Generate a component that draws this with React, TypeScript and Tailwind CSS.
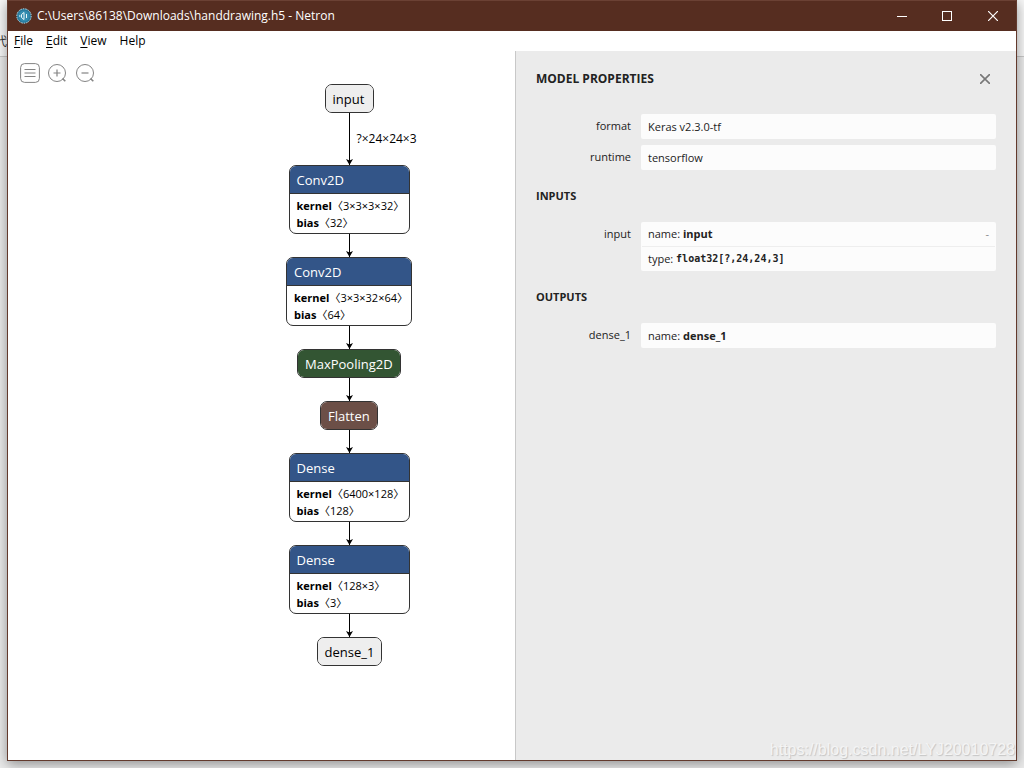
import { FunctionComponent, ReactNode } from "react";

type Attribute = { name: string; value: string };

type LayerProps = {
    title: string;
    color: string;
    width: string;
    attributes?: Attribute[];
};

const layers: LayerProps[] = [
    {
        title: "Conv2D",
        color: "bg-[#335588] text-white",
        width: "w-[121px]",
        attributes: [
            { name: "kernel", value: "〈3×3×3×32〉" },
            { name: "bias", value: "〈32〉" },
        ],
    },
    {
        title: "Conv2D",
        color: "bg-[#335588] text-white",
        width: "w-[126px]",
        attributes: [
            { name: "kernel", value: "〈3×3×32×64〉" },
            { name: "bias", value: "〈64〉" },
        ],
    },
    { title: "MaxPooling2D", color: "bg-[#335533] text-white", width: "w-[104px]" },
    { title: "Flatten", color: "bg-[#6c4f47] text-white", width: "w-[58px]" },
    {
        title: "Dense",
        color: "bg-[#335588] text-white",
        width: "w-[121px]",
        attributes: [
            { name: "kernel", value: "〈6400×128〉" },
            { name: "bias", value: "〈128〉" },
        ],
    },
    {
        title: "Dense",
        color: "bg-[#335588] text-white",
        width: "w-[121px]",
        attributes: [
            { name: "kernel", value: "〈128×3〉" },
            { name: "bias", value: "〈3〉" },
        ],
    },
    { title: "dense_1", color: "bg-[#eeeeee] text-black", width: "w-[65px]" },
];

const Layer: FunctionComponent<LayerProps> = ({ title, color, width, attributes }) => (
    <div className={`${width} shrink-0 overflow-hidden rounded-[7px] border border-[#333333] bg-white`}>
        <div className={`${color} h-[27px] whitespace-nowrap pl-[7px] text-[13px] leading-[28px]`}>{title}</div>
        {attributes && (
            <div className="h-10 border-t border-[#333333] pt-[3px] pl-[7px] text-[11px] leading-[17px] text-black">
                {attributes.map((attribute) => (
                    <div key={attribute.name} className="flex whitespace-nowrap">
                        <b>{attribute.name}</b>
                        <span>{attribute.value}</span>
                    </div>
                ))}
            </div>
        )}
    </div>
);

const Edge: FunctionComponent<{ label?: string }> = ({ label }) => (
    <div className={`relative flex w-[9px] shrink-0 flex-col items-center ${label ? "h-[52px]" : "h-[23px]"}`}>
        <div className="w-px flex-1 bg-black" />
        <svg className="absolute bottom-0 left-0 h-[7px] w-[9px]" viewBox="0 0 9 7">
            <path d="M1 1 L4.5 2.5 L8 1 L4.5 7 Z" fill="#000" />
        </svg>
        {label && (
            <span className="absolute top-[17px] left-[12px] whitespace-nowrap text-[12px] leading-[18px] text-black">
                {label}
            </span>
        )}
    </div>
);

const Section: FunctionComponent<{ title: string; children: ReactNode }> = ({ title, children }) => (
    <section>
        <h3 className="text-[11px] leading-[16px] font-bold uppercase">{title}</h3>
        <dl className="mt-[18px] mb-[18px]">{children}</dl>
    </section>
);

const Property: FunctionComponent<{ name: string; children: ReactNode }> = ({ name, children }) => (
    <div className="mb-[6px] flex text-[11px]">
        <dt className="w-[95px] shrink-0 text-right leading-[24px]">{name}</dt>
        <dd className="ml-[10px] flex-1 rounded-xs bg-[#fcfcfc]">{children}</dd>
    </div>
);

const Value: FunctionComponent<{ compact?: boolean; children: ReactNode }> = ({ compact, children }) => (
    <div className={`flex items-center px-[7px] leading-[16px] ${compact ? "h-6" : "h-[25px]"}`}>{children}</div>
);

const App: FunctionComponent = () => {
    return (
        <div className="relative h-screen overflow-hidden bg-[#ebebeb] px-[7px] pb-[7px] font-['Open_Sans','Noto_Sans','Noto_Sans_CJK_SC',sans-serif]">
            <div className="absolute inset-x-0 top-0 h-[57px] border-b border-[#c8c8c8] bg-[#f7f7f7]">
                <span className="absolute top-[34px] left-[-5px] text-[12px] leading-[16px] text-[#333333]">代</span>
            </div>

            <div className="relative flex h-full flex-col border border-t-0 border-[#633a2d] bg-white shadow-[0_3px_12px_rgba(0,0,0,0.4)]">
                <header className="flex h-[31px] shrink-0 items-center border-t border-[#6b4134] bg-[#562d20] text-white">
                    <svg className="ml-[8px] h-4 w-4" viewBox="0 0 16 16" fill="none">
                        <circle cx="8" cy="8" r="7.2" fill="#27779a" stroke="#b5e4f3" strokeDasharray="1.5 1" />
                        <circle cx="8" cy="8" r="5.6" fill="#338caf" />
                        <path d="M8 4.5L5.500 6.500V9.500L8 11.500Z" stroke="#e8f6fa" />
                        <path d="M10.500 6v4M3.800 7.200v1.600" stroke="#e8f6fa" />
                    </svg>
                    <h1 className="ml-[5px] flex-1 text-[12px] leading-[16px]">
                        C:\Users\86138\Downloads\handdrawing.h5 - Netron
                    </h1>
                    <button aria-label="Minimize" className="flex h-full w-[45px] items-center justify-center">
                        <svg width="10" height="10" stroke="#fff">
                            <path d="M0 5.500H10" />
                        </svg>
                    </button>
                    <button aria-label="Maximize" className="flex h-full w-[45px] items-center justify-center">
                        <svg width="10" height="10" fill="none" stroke="#fff">
                            <rect x="0.5" y="0.5" width="9" height="9" />
                        </svg>
                    </button>
                    <button aria-label="Close" className="flex h-full w-[47px] items-center justify-center">
                        <svg width="10" height="10" stroke="#fff" strokeWidth="1.2">
                            <path d="M0 0L10 10M10 0L0 10" />
                        </svg>
                    </button>
                </header>

                <nav className="flex h-5 shrink-0 items-center gap-[13px] pl-[6px] text-[12px] leading-[22px] text-black">
                    <button><span className="underline underline-offset-2">F</span>ile</button>
                    <button><span className="underline underline-offset-2">E</span>dit</button>
                    <button><span className="underline underline-offset-2">V</span>iew</button>
                    <button>Help</button>
                </nav>

                <div className="flex min-h-0 flex-1">
                    <main className="relative flex flex-1 flex-col items-center pt-[33px] pl-[175px]">
                        <div className="absolute top-3 left-3 flex gap-2">
                            <button aria-label="Menu">
                                <svg className="h-5 w-5" viewBox="0 0 20 20" fill="none" stroke="#848484">
                                    <rect x="0.6" y="0.6" width="18.800" height="18.800" rx="4" />
                                    <path d="M4.500 6.500H15.500M4.500 10H15.500M4.500 13.500H15.500" />
                                </svg>
                            </button>
                            <button aria-label="Zoom in">
                                <svg className="h-5 w-5" viewBox="0 0 20 20" fill="none" stroke="#848484">
                                    <circle cx="9" cy="10" r="8.500" />
                                    <path d="M5.500 10H12.500M9 6.500V13.500" strokeWidth="1.2" />
                                    <path d="M14.500 15.500L17.300 18.300" strokeWidth="1.600" />
                                </svg>
                            </button>
                            <button aria-label="Zoom out">
                                <svg className="h-5 w-5" viewBox="0 0 20 20" fill="none" stroke="#848484">
                                    <circle cx="9" cy="10" r="8.500" />
                                    <path d="M5.500 10H12.500" strokeWidth="1.2" />
                                    <path d="M14.500 15.500L17.300 18.300" strokeWidth="1.600" />
                                </svg>
                            </button>
                        </div>

                        <Layer title="input" color="bg-[#eeeeee] text-black" width="w-[49px]" />
                        {layers.map((layer, index) => (
                            <div key={index} className="flex flex-col items-center">
                                <Edge label={index === 0 ? "?×24×24×3" : undefined} />
                                <Layer {...layer} />
                            </div>
                        ))}
                    </main>

                    <aside className="w-[501px] shrink-0 border-l border-[#c8c8c8] bg-[#ebebeb] px-5 pt-[18px] text-[#222222]">
                        <div className="mb-[25px] flex h-5 items-center justify-between">
                            <h2 className="text-[12px] leading-[22px] font-bold uppercase">Model properties</h2>
                            <button aria-label="Close sidebar" className="mr-[6px]">
                                <svg width="10" height="10" stroke="#777" strokeWidth="1.600">
                                    <path d="M0 0L10 10M10 0L0 10" />
                                </svg>
                            </button>
                        </div>

                        <dl className="mb-[18px]">
                            <Property name="format"><Value>Keras v2.3.0-tf</Value></Property>
                            <Property name="runtime"><Value>tensorflow</Value></Property>
                        </dl>

                        <Section title="Inputs">
                            <Property name="input">
                                <Value compact>
                                    <span className="flex-1">name: <b>input</b></span>
                                    <button aria-label="Collapse" className="text-[#888888]">-</button>
                                </Value>
                                <div className="mx-px border-t border-[#eeeeee]" />
                                <Value compact>
                                    type:&nbsp;<code className="font-['DejaVu_Sans_Mono',monospace] text-[10px] font-bold">float32[?,24,24,3]</code>
                                </Value>
                            </Property>
                        </Section>

                        <Section title="Outputs">
                            <Property name="dense_1">
                                <Value><span>name: <b>dense_1</b></span></Value>
                            </Property>
                        </Section>
                    </aside>
                </div>
            </div>

            <div className="pointer-events-none absolute right-[9px] bottom-[8px] font-['Liberation_Sans',sans-serif] text-[16px] leading-[20px] text-[#f4f4f4] [text-shadow:1px_1px_1px_#c4c4c4]">
                https://blog.csdn.net/LYJ20010728
            </div>
        </div>
    );
};

export default App;
